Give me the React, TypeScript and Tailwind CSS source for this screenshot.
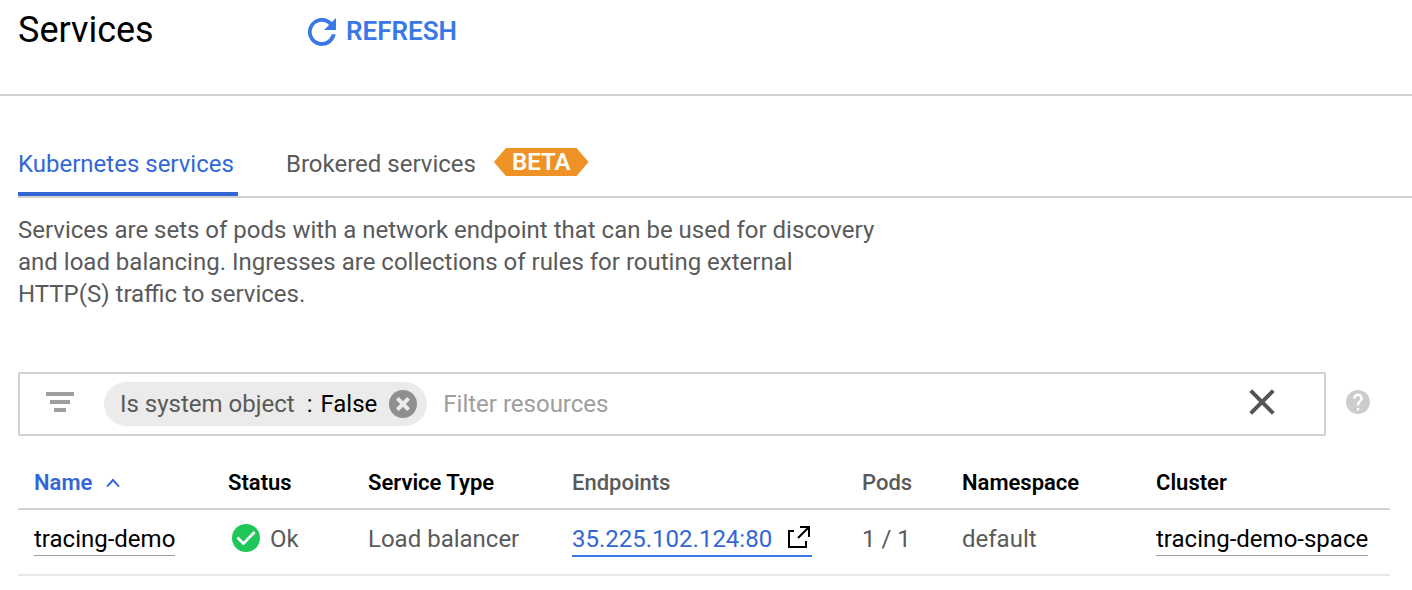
import React, { useState } from "react";

type Column = { label: string; width: string; tone: string };

const columns: Column[] = [
  { label: "Name", width: "w-[194px]", tone: "text-[#3367d6] font-semibold" },
  { label: "Status", width: "w-[140px]", tone: "text-black font-semibold" },
  { label: "Service Type", width: "w-[204px]", tone: "text-black font-semibold" },
  { label: "Endpoints", width: "w-[290px]", tone: "text-[#5a5a5a] font-medium" },
  { label: "Pods", width: "w-[100px]", tone: "text-[#5a5a5a] font-medium" },
  { label: "Namespace", width: "w-[194px]", tone: "text-black font-semibold" },
  { label: "Cluster", width: "", tone: "text-black font-semibold" },
];

function RefreshIcon() {
  return (
    <svg viewBox="0 0 28 28" className="size-7" aria-hidden="true">
      <path
        fill="#3b78e7"
        d="M23.9 4.1A14 14 0 1 0 27.7 16.3H23.6A10.1 10.1 0 1 1 21.1 6.9L16 12H28V0Z"
      />
    </svg>
  );
}

function FilterIcon() {
  return (
    <svg viewBox="0 0 28 20" className="mb-1 h-5 w-7 shrink-0" fill="#9e9e9e" aria-hidden="true">
      <path d="M0 0h28v4H0zM4 8h20v4H4zM8 16h12v4H8z" />
    </svg>
  );
}

function RemoveIcon() {
  return (
    <svg viewBox="0 0 28 28" className="size-7" aria-hidden="true">
      <circle cx="14" cy="14" r="14" fill="#8f8f8f" />
      <path d="M8.4 8.4l11.2 11.2M19.6 8.4L8.4 19.6" stroke="#ebebeb" strokeWidth="4" />
    </svg>
  );
}

function ClearIcon() {
  return (
    <svg viewBox="0 0 26 26" className="size-[26px]" aria-hidden="true">
      <path d="M1.7 1.7l22.6 22.6M24.3 1.7L1.7 24.3" stroke="#555555" strokeWidth="4" />
    </svg>
  );
}

function HelpIcon() {
  return (
    <svg viewBox="2 2 20 20" className="size-6" fill="#cccccc" aria-hidden="true">
      <path d="M12 2C6.48 2 2 6.48 2 12s4.48 10 10 10 10-4.48 10-10S17.52 2 12 2zm1 17h-2v-2h2v2zm2.07-7.75l-.9.92C13.45 12.9 13 13.5 13 15h-2v-.5c0-1.1.45-2.1 1.17-2.83l1.24-1.26c.37-.36.59-.86.59-1.41 0-1.1-.9-2-2-2s-2 .9-2 2H8c0-2.21 1.79-4 4-4s4 1.79 4 4c0 .88-.36 1.68-.93 2.25z" />
    </svg>
  );
}

function SortIcon() {
  return (
    <svg viewBox="0 0 14 10" className="h-[10px] w-[14px]" fill="none" aria-hidden="true">
      <path d="M1 8.6L7 2l6 6.6" stroke="#3367d6" strokeWidth="2" />
    </svg>
  );
}

function OkIcon() {
  return (
    <svg viewBox="0 0 28 28" className="mb-0.5 size-7" aria-hidden="true">
      <circle cx="14" cy="14" r="14" fill="#1fc659" />
      <path d="M5.4 13.6l6 6L22.6 8" fill="none" stroke="#ffffff" strokeWidth="2.8" />
    </svg>
  );
}

function ExternalIcon() {
  return (
    <svg viewBox="0 0 24 24" className="mb-1 size-6" fill="none" stroke="#000000" aria-hidden="true">
      <path d="M8 6H3v16h17v-6" strokeWidth="2" />
      <path d="M14 2h9v10" strokeWidth="2" />
      <path d="M23 2L12 13" strokeWidth="2" />
    </svg>
  );
}

export default function App() {
  const [query, setQuery] = useState("");
  const [filtered, setFiltered] = useState(true);

  return (
    <main className="bg-white font-[Roboto,sans-serif] text-2xl leading-8 text-[#5a5a5a]">
      <header className="flex h-24 items-start border-b-2 border-[#d0d0d0] pl-[18px]">
        <h1 className="w-[290px] text-4xl leading-[60px] text-black">Services</h1>
        <button
          type="button"
          className="flex h-16 items-center gap-2.5 text-[26px] font-semibold text-[#3b78e7]"
        >
          <RefreshIcon />
          <span className="pb-0.5">REFRESH</span>
        </button>
      </header>

      <div className="pl-[18px]">
        <nav className="mt-9 flex h-[66px] gap-12 border-b-2 border-[#d0d0d0]" aria-label="Service kinds">
          <a
            href="#kubernetes"
            aria-current="page"
            className="flex min-w-[220px] items-center border-b-4 border-[#3367d6] pt-1 text-[#3367d6]"
          >
            Kubernetes services
          </a>
          <a href="#brokered" className="flex items-center gap-[18px] border-b-4 border-transparent pt-1">
            <span>Brokered services</span>
            <span className="mb-1 flex h-7 items-center bg-[#ef9226] px-[18px] font-semibold text-white [clip-path:polygon(12px_0,calc(100%-12px)_0,100%_50%,calc(100%-12px)_100%,12px_100%,0_50%)]">
              BETA
            </span>
          </a>
        </nav>

        <p className="mt-4 max-w-[864px]">
          Services are sets of pods with a network endpoint that can be used for discovery and load
          balancing. Ingresses are collections of rules for routing external HTTP(S) traffic to
          services.
        </p>

        <div className="mt-[62px] flex items-center gap-5 pr-[42px]">
          <div className="flex h-16 flex-1 items-center rounded-xs border-2 border-[#d0d0d0] pr-[49px] pl-[26px]">
            <FilterIcon />
            {filtered && (
              <div className="ml-[30px] flex h-11 shrink-0 items-center rounded-full bg-[#ebebeb] pr-2.5 pl-4">
                <span className="flex gap-3">
                  <span>Is system object</span>
                  <span className="flex gap-2 text-black">
                    <span>:</span>
                    <span>False</span>
                  </span>
                </span>
                <button
                  type="button"
                  aria-label="Remove filter"
                  className="ml-3"
                  onClick={() => setFiltered(false)}
                >
                  <RemoveIcon />
                </button>
              </div>
            )}
            <input
              type="text"
              aria-label="Filter resources"
              placeholder="Filter resources"
              value={query}
              onChange={(event) => setQuery(event.target.value)}
              className="ml-4 min-w-0 flex-1 outline-none placeholder:text-[#9e9e9e]"
            />
            <button
              type="button"
              aria-label="Clear filters"
              className="pb-1"
              onClick={() => setQuery("")}
            >
              <ClearIcon />
            </button>
          </div>
          <button type="button" aria-label="Help" className="pb-1">
            <HelpIcon />
          </button>
        </div>

        <div className="pr-[22px]">
          <table className="mt-[21px] w-full table-fixed border-collapse text-left">
            <thead>
              <tr className="h-[52px] border-b-2 border-[#d4d4d4] text-[22px]">
                {columns.map((column) => (
                  <th
                    key={column.label}
                    scope="col"
                    className={`${column.width} ${column.tone} pl-4 whitespace-nowrap`}
                  >
                    {column.label === "Name" ? (
                      <button type="button" className="flex items-center gap-3.5">
                        Name
                        <SortIcon />
                      </button>
                    ) : (
                      column.label
                    )}
                  </th>
                ))}
              </tr>
            </thead>
            <tbody>
              <tr className="h-[66px] border-b-2 border-[#e8e8e8] align-top whitespace-nowrap">
                <td className="pt-[13px] pl-4">
                  <a
                    href="#tracing-demo"
                    className="inline-block border-b border-[#9e9e9e] align-top text-black"
                  >
                    tracing-demo
                  </a>
                </td>
                <td className="pt-[13px] pl-4">
                  <span className="flex items-center gap-2.5 pl-1">
                    <OkIcon />
                    Ok
                  </span>
                </td>
                <td className="pt-[13px] pl-4">Load balancer</td>
                <td className="pt-[13px] pl-4">
                  <a
                    href="http://35.225.102.124:80"
                    className="inline-flex items-center gap-3.5 border-b-2 border-[#3b78e7] pr-0.5 align-top text-[#3367d6]"
                  >
                    35.225.102.124:80
                    <ExternalIcon />
                  </a>
                </td>
                <td className="pt-[13px] pl-4">1 / 1</td>
                <td className="pt-[13px] pl-4">default</td>
                <td className="pt-[13px] pl-4">
                  <a
                    href="#cluster"
                    className="inline-block border-b border-[#9e9e9e] align-top text-black"
                  >
                    tracing-demo-space
                  </a>
                </td>
              </tr>
            </tbody>
          </table>
        </div>
      </div>
    </main>
  );
}
